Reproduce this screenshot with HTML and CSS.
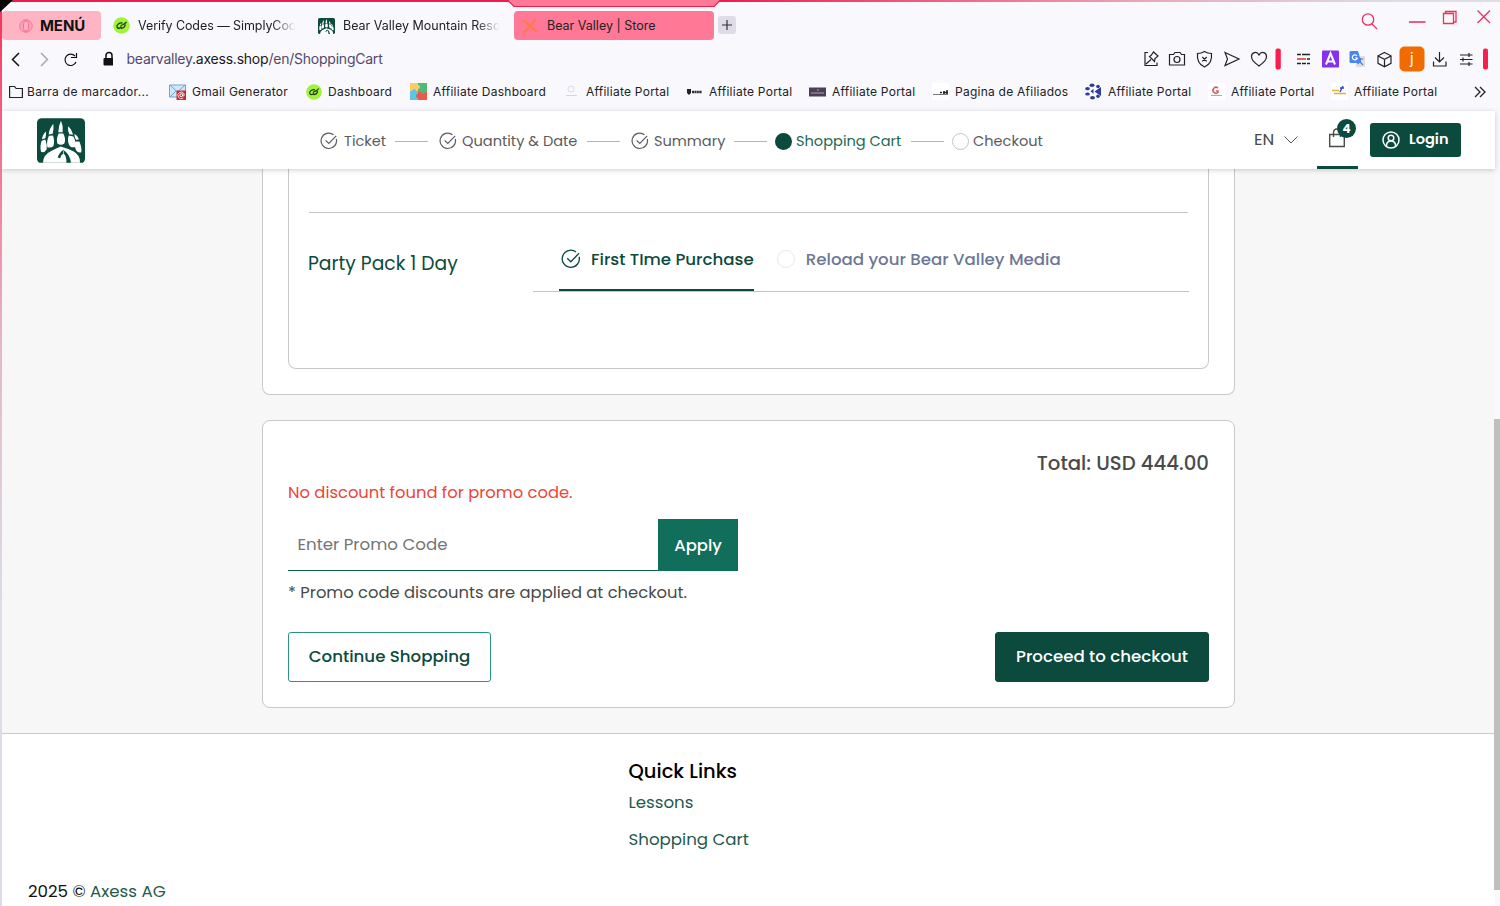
FILE: index.html
```html
<!DOCTYPE html>
<html lang="en">
<head>
    <meta charset="utf-8">
    <title>Bear Valley | Store</title>
    <link rel="stylesheet" href="styles.css">
</head>
<body>
    <svg width="0" height="0" class="defs">
        <symbol id="check" viewBox="0 0 18 18">
            <path d="M16.300 7A7.700 7.700 0 1 1 13.500 2.700M5.600 8.300l3.200 3.200 7.400-7.600" fill="none" stroke="currentColor" stroke-width="1.2"/>
        </symbol>
        <symbol id="simply" viewBox="0 0 17 17">
            <circle cx="8.5" cy="8.5" r="8.3" fill="#a2f23c"/>
            <path d="M9.500 6C6 5.500 3.500 8 4 10c.5 1.800 3 1.500 4.500 0M7.500 9.300c1.500-2.500 3.500-1 6-4.500M8 11.300c2.500 0 4-1.500 4.200-4" fill="none" stroke="#1d3a14" stroke-width="1.300"/>
        </symbol>
        <symbol id="paw" viewBox="0 0 144 134">
            <path d="M14 0h116a14 14 0 0 1 14 14v106q0 14-12 14H12q-12 0-12-14V14A14 14 0 0 1 14 0z" fill="#0b4a3c"/>
            <g fill="#fff">
                <path d="M72 8q8 17 5 34l-13 0Q64 24 72 8zM49 17q2 18-2 30l-12 2Q37 31 49 17zM27 40q1 12-2 20l-10 3Q17 48 27 40zM93 24q12 10 15 26l-11-2Q92 38 93 24zM112 47q11 6 14 17l-9 1Q112 58 112 47z"/>
                <path d="M65 46h14q9 18 3 30-10 8-21 0-4-14 4-30zM36 53l12-1q6 18 1 32-8 6-18 3-3-20 5-34zM14 68l11-4q6 16 4 30-8 12-17 7-4-18 2-33zM95 52l14 3q10 18 7 31-10 4-17-2-10-14-4-32zM117 70l10 0q8 18 6 32-9 4-16-6-6-14 0-26z"/>
                <path d="M18 134q0-24 26-36 14-8 27-13 20 6 38 14 22 12 20 35z"/>
            </g>
            <path d="M62 118q4-14 18-24-3 8-2 14-6 0-8 12zM80 96q18 10 22 38h-14q2-18-8-28z" fill="#0b4a3c"/>
        </symbol>
    </svg>

    <div class="window">
        <div class="notch"><svg width="212" height="7"><path d="M0 0h212l-6 6H6z" fill="#ff7896"/><path d="M0 .5l6 6h200l6-6" fill="none" stroke="#ee1c4e" stroke-width="1.2"/></svg></div>
        <div class="corner"></div>

        <div class="tabs">
            <div class="menu">
                <svg width="14" height="14" viewBox="0 0 14 14" fill="none" stroke="#fa6d8c"><circle cx="7" cy="7" r="6.200"/><ellipse cx="7" cy="7" rx="2.600" ry="5"/><ellipse cx="7" cy="7" rx="4.200" ry="6" stroke-width=".5"/></svg>
                <span class="menu-text">MENÚ</span>
            </div>
            <div class="tab tab-one"><svg width="17" height="17"><use href="#simply"/></svg><span class="fade">Verify Codes — SimplyCoc</span></div>
            <div class="tab tab-two"><svg width="17" height="16"><use href="#paw"/></svg><span class="fade">Bear Valley Mountain Reso</span></div>
            <div class="tab active"><svg width="16" height="16" viewBox="0 0 16 16"><path d="M1 2l14 12M14 1L2 15" stroke="#ff7a45" stroke-width="2"/></svg><span>Bear Valley | Store</span></div>
            <div class="new-tab"><svg width="10" height="10"><path d="M5 0v10M0 5h10" stroke="#333" stroke-width="1.200"/></svg></div>
            <svg class="window-buttons" width="140" height="24" viewBox="0 0 140 24" fill="none" stroke="#f0315b" stroke-width="1.300">
                <circle cx="15" cy="12.500" r="5.700"/><path d="M19 17l5 5"/>
                <path d="M56 15h16.500" stroke-width="1.600"/>
                <path d="M90.500 6.500h10v10h-10zM92.500 6.500V4.500h10.500v10.500h-2.500"/>
                <path d="M124.500 3.500l12.500 12.500M137 3.500L124.500 16"/>
            </svg>
        </div>

        <div class="address">
            <svg class="nav" width="112" height="22" viewBox="0 0 112 22" fill="none" stroke="#111" stroke-width="1.500">
                <path d="M18 5l-6.500 6.500L18 18"/>
                <path d="M40 5l6.500 6.500L40 18" stroke="#aaa"/>
                <path d="M74 8A5.700 5.700 0 1 0 75 14M75.500 5v4.500H70" stroke-width="1.200"/>
                <path d="M105 10V7.500a3 3 0 0 1 6 0V10" /><rect x="102.500" y="10" width="11" height="7.500" rx="1" fill="#111" stroke="none"/>
            </svg>
            <p class="url">bearvalley<span>.axess.shop</span>/en/ShoppingCart</p>
            <svg class="tools" width="350" height="28" viewBox="1140 45 350 28" fill="none" stroke="#222" stroke-width="1.200">
                <path d="M1148 52.500h-3v13h12v-3M1146 64l5-4.500M1149.500 56.500l5 5 .5-3 3-2.500-4.500-4-2.500 3.500z"/>
                <path d="M1169.500 54.500h4l1.500-2h5l1.500 2h3v10.500h-15z"/><circle cx="1177" cy="59.500" r="3"/>
                <path d="M1204.500 51.500q3 2 7 2 1 10-7 13.500-8-3.500-7-13.500 4 0 7-2zM1202.300 57l4.400 4.400M1206.700 57l-4.400 4.400"/>
                <path d="M1225 52.500l14 6.500-14 6.500 2.500-6.500z"/>
                <path d="M1259 66c-5-4-7.500-6-7.500-9.500 0-4.500 5.500-5.500 7.500-1.500 2-4 7.500-3 7.500 1.500 0 3.500-2.500 5.500-7.500 9.500z"/>
                <rect x="1275.500" y="48.500" width="5.300" height="21" rx="2" fill="#fa1e4e" stroke="none"/>
                <path d="M1297 54.500h4m1 0h8M1297 63.500h4m1 0h4m1 0h3" stroke-width="1.500"/><path d="M1297 59h9" stroke="#d83333" stroke-width="1.500"/><path d="M1307 59h3" stroke-width="1.500"/>
                <rect x="1322" y="50.500" width="17" height="17" rx="1" fill="#8730ed" stroke="none"/>
                <path d="M1326 64.500l4.500-11 4.500 11M1327.500 61.500h6" stroke="#fff" stroke-width="2"/>
                <rect x="1356" y="56" width="9" height="11" fill="#dce0e6" stroke="none"/><path d="M1357.500 59h6M1360.500 58v1q0 3-3 5M1359 61l4 4" stroke="#667c9b"/>
                <path d="M1351 51h7l3.500 12H1351q-1.500 0-1.500-1.500v-9q0-1.500 1.500-1.500z" fill="#4686ef" stroke="none"/><path d="M1357 56a2.500 2.500 0 1 0 .3 2H1355" stroke="#fff"/>
                <path d="M1384.500 52.500l6.500 3.300v7.500l-6.500 3.500-6.500-3.500v-7.500zM1378 56l6.500 3.300 6.500-3.300M1384.500 59.300v7.200"/>
                <rect x="1399.500" y="46.500" width="25" height="25" rx="5" fill="#f06c00" stroke="none"/>
                <text x="1410" y="64" class="avatar-text">j</text>
                <path d="M1439.500 52v9.500M1435 57.500l4.500 4.500 4.500-4.500M1433.500 61.500v4.500h12.500v-4.500"/>
                <path d="M1460 55h12.500M1460 59.500h12.500M1460 64h12.500M1469 53v4M1463 57.500v4M1469 62v4"/>
                <rect x="1483" y="48.500" width="5" height="21" rx="2" fill="#fa1e4e" stroke="none"/>
            </svg>
        </div>

        <div class="bookmarks">
            <div><svg width="14" height="14"><path d="M.6 1.500h5l1.500 2h6.300v9H.6z" fill="none" stroke="#222" stroke-width="1.200"/></svg><span class="folder">Barra de marcador...</span></div>
            <div><svg width="17" height="16"><path d="M.5 1h16v12H.5z" fill="#cce8fa" stroke="#6ea7d5"/><path d="M1 1l7.500 7L16 1M1 13l6-6M16 13l-6-6" fill="none" stroke="#6ea7d5"/><rect x="7.500" y="6.500" width="9.500" height="9.500" fill="#c92a32"/><circle cx="12.200" cy="11.200" r="1.400" fill="none" stroke="#fff"/><path d="M13.700 9.500v2.500q2 .5 1.500-2a3.300 3.300 0 1 0-1 4" fill="none" stroke="#fff" stroke-width=".8"/></svg><span>Gmail Generator</span></div>
            <div><svg width="16" height="16"><use href="#simply"/></svg><span>Dashboard</span></div>
            <div><svg width="17" height="17"><path d="M0 0h8v8H0z" fill="#f8cd69"/><path d="M8 0h9v9H8z" fill="#4fba79"/><path d="M0 8h8v9H0z" fill="#5bc5ec"/><path d="M8 9h9v8H8z" fill="#eb5749"/><circle cx="8" cy="4" r="2" fill="#f8cd69"/><circle cx="13" cy="9" r="2" fill="#4fba79"/><circle cx="4" cy="8" r="2" fill="#5bc5ec"/><circle cx="8" cy="13" r="2" fill="#eb5749"/></svg><span>Affiliate Dashboard</span></div>
            <div><svg width="17" height="17"><circle cx="8" cy="6" r="3" fill="none" stroke="#d9dbe8"/><path d="M3 12.500h11" stroke="#d5d5da"/></svg><span>Affiliate Portal</span></div>
            <div><svg width="17" height="17"><path d="M1 6h4v4l-2 2-2-2z" fill="#222"/><path d="M6 9h10" stroke="#333" stroke-width="2.500" stroke-dasharray="2 .4"/></svg><span>Affiliate Portal</span></div>
            <div><svg width="17" height="17"><path d="M0 4.500h17v9H0z" fill="#4c3d58"/><path d="M2 10h13M8 7h2" stroke="#aaa0b3"/></svg><span>Affiliate Portal</span></div>
            <div><svg width="17" height="17"><path d="M0 0h17v17H0z" fill="#fff"/><path d="M1 11.500h15" stroke="#777"/><path d="M8 9.500h2m1 0h5M12 8v3M15 7v4" stroke="#222" stroke-width="1.500"/></svg><span>Pagina de Afiliados</span></div>
            <div><svg width="17" height="17" fill="#2e3a9f"><ellipse cx="7" cy="2.300" rx="2.500" ry="1.700"/><ellipse cx="2.500" cy="5.700" rx="2.300" ry="1.600"/><ellipse cx="2.500" cy="11" rx="2.300" ry="1.600"/><ellipse cx="7.500" cy="14.700" rx="2.500" ry="1.700"/><circle cx="13" cy="3.500" r="1.800"/><circle cx="13" cy="13.300" r="1.800"/><path d="M16 4v9L9.500 8.500zM5.500 8.300l3-2.500v5z"/></svg><span>Affiliate Portal</span></div>
            <div><svg width="17" height="17"><path d="M0 0h17v17H0z" fill="#fff"/><path d="M10 5a3 3 0 1 0 0 4.500V8H8" fill="none" stroke="#d45b62" stroke-width="1.500"/><path d="M3 12.500h11" stroke="#a9a3cc"/></svg><span>Affiliate Portal</span></div>
            <div><svg width="17" height="17"><path d="M0 0h17v17H0z" fill="#fff"/><path d="M1 7.500h7M3 10.500h12" stroke="#dcb03d" stroke-width="1.500"/><path d="M9 9l3-6M9 5h4" stroke="#394ccc" stroke-width="1.500"/></svg><span>Affiliate Portal</span></div>
            <div><svg width="12" height="12"><path d="M1 1l5 5-5 5M6 1l5 5-5 5" fill="none" stroke="#222" stroke-width="1.300"/></svg></div>
        </div>

        <div class="page">
            <div class="header">
                <svg class="logo" width="48" height="45"><use href="#paw"/></svg>
                <div class="steps">
                    <div class="step step-ticket"><svg width="18" height="18"><use href="#check"/></svg><span>Ticket</span><hr></div>
                    <div class="step step-date"><svg width="18" height="18"><use href="#check"/></svg><span>Quantity &amp; Date</span><hr></div>
                    <div class="step step-summary"><svg width="18" height="18"><use href="#check"/></svg><span>Summary</span><hr></div>
                    <div class="step step-cart"><i class="dot"></i><span>Shopping Cart</span><hr></div>
                    <div class="step"><i class="dot empty"></i><span>Checkout</span></div>
                </div>
                <div class="lang"><span>EN</span><svg width="14" height="8"><path d="M.5.5L7 7 13.500.5" fill="none" stroke="#555"/></svg></div>
                <div class="bag">
                    <svg width="18" height="22" viewBox="0 0 18 22" fill="none" stroke="#4a4a4a" stroke-width="1.400"><path d="M1.700 7.500h14.600v12H1.700zM5.500 10V6q0-4 3.500-4t3.500 4v4"/></svg>
                    <span class="badge">4</span>
                </div>
                <button class="login">
                    <svg width="18" height="18" fill="none" stroke="#fff" stroke-width="1.500"><circle cx="9" cy="9" r="8"/><circle cx="9" cy="7" r="2.800"/><path d="M4.500 15v-1.500q1-3.500 4.500-3.500t4.500 3.500V15"/></svg>
                    <span>Login</span>
                </button>
            </div>

            <div class="content">
                <div class="card items">
                    <div class="items-inner">
                        <hr class="line">
                        <div class="item">
                            <p class="item-name">Party Pack 1 Day</p>
                            <div class="options">
                                <div class="option selected"><svg width="20" height="20"><use href="#check"/></svg><span>First TIme Purchase</span></div>
                                <div class="option"><i class="dot faint"></i><span>Reload your Bear Valley Media</span></div>
                            </div>
                        </div>
                    </div>
                </div>

                <div class="card totals">
                    <p class="total">Total: USD 444.00</p>
                    <p class="error">No discount found for promo code.</p>
                    <div class="promo">
                        <div class="promo-input">Enter Promo Code</div>
                        <button class="apply">Apply</button>
                    </div>
                    <p class="note">* Promo code discounts are applied at checkout.</p>
                    <div class="buttons">
                        <button class="continue">Continue Shopping</button>
                        <button class="proceed">Proceed to checkout</button>
                    </div>
                </div>
            </div>

            <div class="footer">
                <div class="links">
                    <p class="links-title">Quick Links</p>
                    <a>Lessons</a>
                    <a>Shopping Cart</a>
                </div>
                <p class="copyright">2025 © <a>Axess AG</a></p>
            </div>
        </div>
        <div class="scrollbar"></div>
    </div>
</body>
</html>
```
FILE: styles.css
```css
*{
    box-sizing: border-box;
}
p{
    margin: 0;
}
body{
    margin: 0;
    font-family: Poppins, Inter, "Open Sans", sans-serif;
    color: #4a4a4a;
}
.defs{
    position: absolute;
}
svg{
    flex-shrink: 0;
}
.window{
    position: relative;
    display: flex;
    flex-direction: column;
    width: 1500px;
    height: 906px;
    overflow: hidden;
    background-color: #f9f8fc;
}
/* glowing frame on the top and left edge */
.window::before{
    content: "";
    position: absolute;
    left: 0;
    top: 0;
    width: 2px;
    height: 906px;
    background: linear-gradient(#f92c59, #f1839d 200px, #e5b8c9 350px, #dcdbe6 600px);
    z-index: 2;
}
.window::after{
    content: "";
    position: absolute;
    left: 0;
    top: 0;
    width: 1500px;
    height: 2px;
    background: linear-gradient(90deg, #ee1c4e 720px, #eaa8ba 1150px, #dedde6 1400px);
}
.notch{
    position: absolute;
    left: 508px;
    top: 0;
    height: 7px;
    line-height: 0;
    z-index: 3;
}
.corner{
    position: absolute;
    left: 0;
    top: 0;
    width: 13px;
    height: 12px;
    background-color: #000;
    clip-path: polygon(0 0, 100% 0, 0 100%);
    z-index: 4;
}
.tabs, .address, .bookmarks{
    font-family: Inter, sans-serif;
}
.tabs{
    display: flex;
    height: 40px;
    padding: 11px 7px 0 2px;
    font-size: 12.5px;
    color: #222;
}
.menu{
    display: flex;
    align-items: center;
    gap: 7px;
    width: 99px;
    height: 29px;
    padding-left: 17px;
    background-color: #ffb4c4;
    border-radius: 4px;
}
.menu-text{
    font-size: 15px;
    font-weight: 700;
    letter-spacing: -0.1px;
    color: #111;
}
.tab{
    display: flex;
    align-items: center;
    height: 29px;
    white-space: nowrap;
}
.tab-one{
    width: 204px;
    padding-left: 12px;
    gap: 8px;
    letter-spacing: -0.07px;
}
.tab-two{
    width: 209px;
    padding-left: 13px;
    gap: 8px;
}
.fade{
    -webkit-mask-image: linear-gradient(90deg, #000 85%, transparent);
    mask-image: linear-gradient(90deg, #000 85%, transparent);
}
.active{
    width: 200px;
    padding-left: 8px;
    gap: 9px;
    background-color: #ff7896;
    border-radius: 4px;
}
.new-tab{
    display: flex;
    align-items: center;
    justify-content: center;
    width: 18px;
    height: 18px;
    margin: 5px 0 0 4px;
    background-color: #dfdbe8;
    border-radius: 3px;
}
.window-buttons{
    margin: -4px 0 0 auto;
}
.address{
    display: flex;
    align-items: center;
    height: 38px;
}
.nav{
    margin: 0 0 1px 1px;
}
.url{
    margin: 0 0 2px 13.5px;
    font-size: 14px;
    letter-spacing: -0.227px;
    color: #544a68;
    white-space: nowrap;
}
.url span{
    color: #1c1823;
}
.tools{
    margin: 0 10px 0 auto;
}
.avatar-text{
    font-size: 15px;
    fill: #fff;
    stroke: none;
}
.bookmarks{
    display: grid;
    grid-template-columns: 160px 137px 104px 153px 123px 123px 123px 153px 123px 123px 143px 12px;
    height: 33px;
    padding-left: 9px;
    font-size: 12px;
    letter-spacing: 0.25px;
    color: #222;
    white-space: nowrap;
}
.bookmarks div{
    display: flex;
    align-items: center;
    gap: 6px;
    height: 27px;
}
.bookmarks .folder{
    margin-left: -2px;
    letter-spacing: 0.32px;
}
.page{
    width: 1493px;
    height: 795px;
    margin-left: 2px;
    background-color: #f7f7f7;
}
.header{
    position: relative;
    display: flex;
    height: 58px;
    padding-left: 35px;
    background-color: #fff;
    box-shadow: 0 1px 5px rgba(0, 0, 0, 0.2);
}
.logo{
    margin-top: 7px;
}
.steps{
    display: flex;
    flex-shrink: 0;
    align-items: center;
    width: 1134px;
    padding: 2px 0 0 235px;
    font-size: 14.57px;
    white-space: nowrap;
    color: #5c5c5c;
}
.step{
    display: flex;
    flex-shrink: 0;
    align-items: center;
    gap: 5px;
}
.step hr{
    flex-shrink: 0;
    width: 33px;
    height: 1px;
    margin: 0 11px 0 auto;
    border: 0;
    background-color: #b5b5b5;
}
.step-ticket{
    width: 119px;
    gap: 6px;
}
.step-date{
    width: 192px;
}
.step-summary{
    width: 144px;
}
.step-cart{
    width: 177px;
    color: #1c6a54;
}
.step-summary hr, .step-cart hr{
    margin-right: 8px;
}
.dot{
    width: 17px;
    height: 17px;
    margin-right: -1px;
    border-radius: 50%;
    background-color: #0b4a3c;
}
.empty{
    background-color: #fff;
    border: 1px solid #c4c4c4;
}
.lang{
    display: flex;
    flex-shrink: 0;
    align-items: center;
    gap: 10px;
    width: 98px;
    padding: 0 0 1px 35px;
    font-size: 16.65px;
}
.bag{
    position: relative;
    flex-shrink: 0;
    width: 41px;
    height: 58px;
    padding: 16px 0 0 11px;
    border-bottom: 3px solid #0b4a3c;
}
.badge{
    position: absolute;
    left: 20px;
    top: 8px;
    width: 19px;
    height: 19px;
    line-height: 20px;
    border-radius: 50%;
    background-color: #0b4a3c;
    color: #fff;
    font-size: 12px;
    font-weight: 700;
    text-align: center;
}
button{
    padding: 0;
    font-family: inherit;
    cursor: pointer;
}
.login{
    display: flex;
    flex-shrink: 0;
    align-items: center;
    gap: 9px;
    width: 91px;
    height: 34px;
    margin: 12px 0 0 12px;
    padding: 0 0 1px 12px;
    background-color: #0b4a3c;
    border: 0;
    border-radius: 3px;
    color: #fff;
    font-size: 14.57px;
    font-weight: 600;
}
.content{
    width: 973px;
    height: 564px;
    margin-left: 260px;
}
.card{
    background-color: #fff;
    border: 1px solid #c9c9c9;
    border-radius: 8px;
    padding: 0 25px;
}
.items{
    height: 226px;
    border-top: 0;
    border-radius: 0 0 8px 8px;
}
.items-inner{
    height: 200px;
    padding: 43px 19px 0 19px;
    border: 1px solid #c9c9c9;
    border-top: 0;
    border-radius: 0 0 8px 8px;
}
.line{
    height: 1px;
    margin: 0 1px;
    border: 0;
    background-color: #c4c4c4;
}
.item{
    display: flex;
    white-space: nowrap;
}
.item-name{
    width: 225px;
    padding-top: 39px;
    font-size: 18.73px;
    line-height: 24px;
    color: #0b4a3c;
}
.options{
    display: flex;
    gap: 23px;
    width: 656px;
    height: 79px;
    padding: 14px 0 0 26px;
    border-bottom: 1px solid #c4c4c4;
    font-size: 16.65px;
    font-weight: 500;
    color: #6d7795;
}
.option{
    display: flex;
    align-items: center;
    height: 64px;
    gap: 10px;
}
.selected{
    border-bottom: 2px solid #0b4a3c;
    padding: 2px 0 0 2px;
    color: #0b4a3c;
}
.faint{
    background-color: #fff;
    border: 1px solid #e7e7ec;
    margin: 0 1px 0 0;
    width: 18px;
    height: 18px;
}
.totals{
    height: 288px;
    margin-top: 25px;
    font-size: 16.65px;
    line-height: 24px;
}
.total{
    padding-top: 30px;
    text-align: right;
    font-size: 19.7px;
    font-weight: 500;
}
.error{
    margin-top: 6px;
    font-size: 16.38px;
    color: #ee4438;
}
.promo{
    display: flex;
    width: 450px;
    margin-top: 14px;
}
.promo-input{
    width: 370px;
    height: 52px;
    padding: 14px 9.5px;
    border-bottom: 1px solid #0b5f4d;
    color: #757575;
}
.apply{
    width: 80px;
    height: 52px;
    background-color: #116e5a;
    border: 0;
    color: #fff;
    font-size: 16.4px;
    font-weight: 500;
}
.note{
    margin-top: 10px;
    font-size: 16.38px;
}
.buttons{
    display: flex;
    justify-content: space-between;
    margin-top: 27px;
}
.buttons button{
    height: 50px;
    padding-bottom: 2px;
    border: 1px solid #2a9482;
    border-radius: 3px;
    font-size: 16.65px;
    font-weight: 500;
}
.continue{
    width: 203px;
    background-color: #fff;
    color: #0b4a3c;
}
.buttons .proceed{
    width: 214px;
    background-color: #0b4a3c;
    border-color: #0b4a3c;
    color: #fff;
}
.footer{
    height: 173px;
    padding-top: 26px;
    border-top: 1px solid #c9c9c9;
    background-color: #fff;
    font-size: 16.65px;
}
.footer a{
    color: #24594b;
}
.links{
    display: flex;
    flex-direction: column;
    align-items: flex-start;
    height: 120px;
    margin-left: 626.5px;
    line-height: 24px;
}
.links a{
    margin-top: 7px;
    margin-bottom: 6px;
}
.links-title{
    font-size: 19.5px;
    font-weight: 500;
    color: #000;
}
.copyright{
    margin-left: 26px;
    color: #111;
    line-height: 24px;
}
.scrollbar{
    position: absolute;
    right: 0;
    top: 419px;
    width: 6px;
    height: 471px;
    background-color: #bfbfbf;
}
```
